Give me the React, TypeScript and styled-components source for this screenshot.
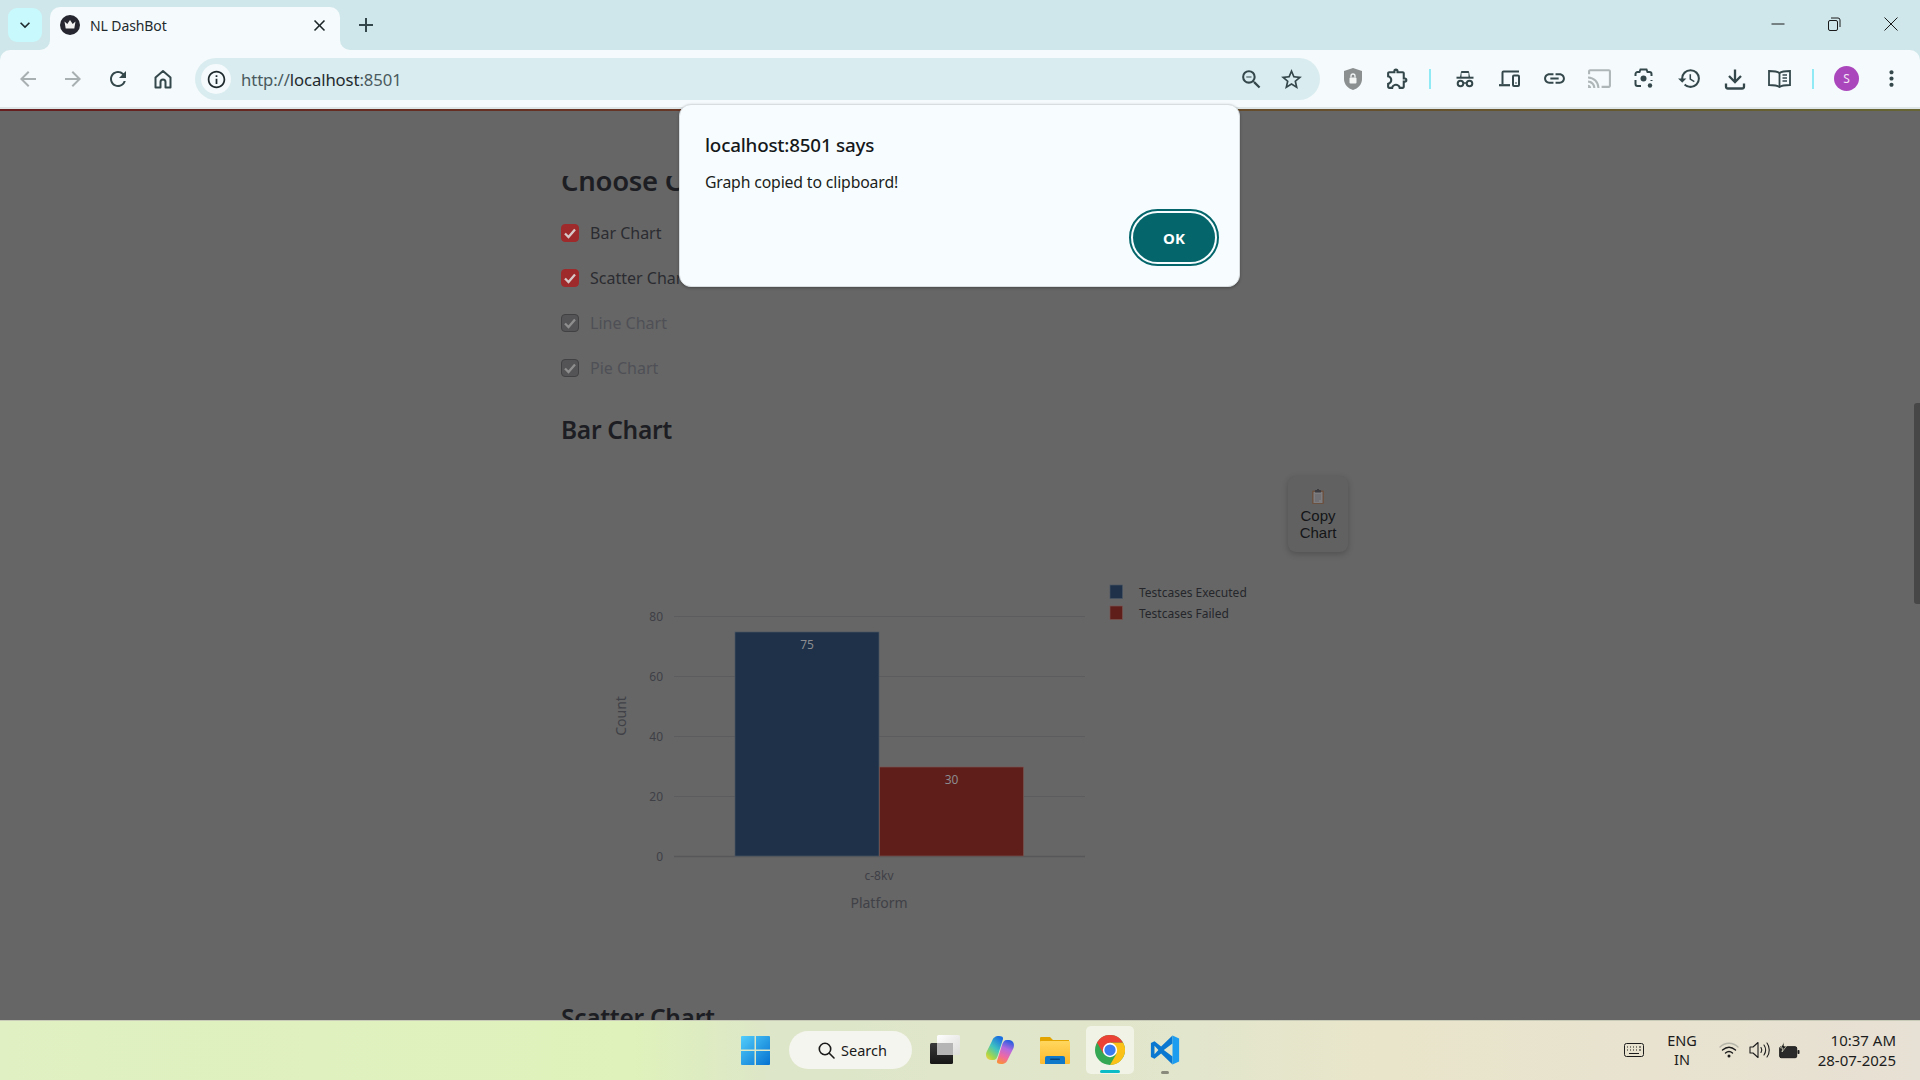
import React from "react";
import styled, { createGlobalStyle } from "styled-components";
import {
  MdArrowBack, MdArrowForward, MdRefresh, MdInfoOutline, MdOutlineZoomOut,
  MdStarBorder, MdOutlineExtension, MdLink, MdCast, MdHistory, MdMoreVert,
  MdClose, MdAdd, MdKeyboardArrowDown,
} from "react-icons/md";

const UI = `"Noto Sans", "Open Sans", sans-serif`;
const PAGE = `"Noto Sans", "Open Sans", sans-serif`;

const Global = createGlobalStyle`
  html, body { margin: 0; padding: 0; width: 1920px; height: 1080px; overflow: hidden; background: #666; }
  #root { width: 1920px; height: 1080px; }
  * { box-sizing: border-box; }
`;

const Shell = styled.div`
  position: relative; width: 1920px; height: 1080px; display: flex; flex-direction: column;
  overflow: hidden; font-family: ${UI}; background: #666;
`;

/* ---------- tab strip ---------- */
const TabStrip = styled.div`
  height: 50px; flex: none; background: #cfe7ea; display: flex; align-items: flex-start; padding-left: 8px;
`;
const TabList = styled.div`
  width: 34px; height: 34px; margin-top: 8px; border-radius: 9px; background: #c8f9fd; color: #1f2a2e;
  display: flex; align-items: center; justify-content: center; font-size: 20px;
`;
const Tab = styled.div`
  position: relative; width: 290px; height: 43px; margin: 7px 0 0 8px; background: #f5fafc;
  border-radius: 10px 10px 0 0; display: flex; align-items: center; padding: 0 0 7px 10px;
  &::before, &::after {
    content: ""; position: absolute; bottom: 0; width: 10px; height: 10px; background: transparent;
  }
  &::before { left: -10px; border-bottom-right-radius: 10px; box-shadow: 4px 4px 0 4px #f5fafc; }
  &::after { right: -10px; border-bottom-left-radius: 10px; box-shadow: -4px 4px 0 4px #f5fafc; }
`;
const TabTitle = styled.span`
  margin-left: 10px; font-size: 14px; color: #1f2a2e; width: 220px; white-space: nowrap; letter-spacing: -0.1px;
`;
const TabClose = styled.span`
  font-size: 19px; color: #1c2528; display: flex; margin-left: 0;
`;
const NewTab = styled.span`
  margin: 13px 0 0 14px; font-size: 24px; color: #34484c; display: flex;
`;
const Spacer = styled.div`flex: 1;`;
const WinButton = styled.div`
  width: 56.5px; height: 48px; display: flex; align-items: center; justify-content: center; color: #1a1a1a;
`;
const WinControls = styled.div`
  display: flex; padding-right: 1px;
`;

/* ---------- toolbar ---------- */
const Toolbar = styled.div`
  height: 57px; flex: none; background: #f5fafc; display: flex; align-items: center; padding-left: 5px;
  border-radius: 10px 10px 0 0; position: relative;
`;
const ToolbarWrap = styled.div`background: #cfe7ea; flex: none;`;
const Hairline = styled.div`height: 2px; flex: none; background: #dfe6e8;`;
const Decoration = styled.div`
  height: 2px; flex: none; background: linear-gradient(90deg, #661e1e, #666533);
`;
const NavBtn = styled.div<{ $off?: boolean }>`
  width: 45px; height: 44px; display: flex; align-items: center; justify-content: center; font-size: 24px;
  color: ${(p) => (p.$off ? "#a9b0b2" : "#34484c")};
`;
const Omnibox = styled.div`
  width: 1125px; height: 42px; margin: 1px 0 0 10px; border-radius: 21px; background: #d9ecef;
  display: flex; align-items: center; padding: 0 9px 0 6px;
`;
const InfoChip = styled.div`
  width: 30px; height: 30px; border-radius: 50%; background: #f5fafc; color: #1f2a2e; font-size: 21px;
  display: flex; align-items: center; justify-content: center;
`;
const Url = styled.div`
  margin-left: 10px; flex: 1; font-size: 16.7px; color: #4a5a5e; letter-spacing: -0.1px; white-space: nowrap;
`;
const UrlHost = styled.span`color: #1f2a2e;`;
const OmniBtn = styled.div`
  width: 40px; height: 36px; display: flex; align-items: center; justify-content: center; font-size: 25px; color: #34484c;
`;
const ToolGroup = styled.div<{ $ml: number }>`
  display: flex; align-items: center; margin-left: ${(p) => p.$ml}px;
`;
const ToolBtn = styled.div<{ $off?: boolean }>`
  width: 45px; height: 40px; display: flex; align-items: center; justify-content: center; font-size: 25px;
  color: ${(p) => (p.$off ? "#aeb6b8" : "#34484c")};
`;
const Sep = styled.div<{ $ml: number }>`
  width: 2px; height: 20px; background: #8feaf5; margin-left: ${(p) => p.$ml}px;
`;
const Avatar = styled.div`
  width: 25px; height: 25px; border-radius: 50%; background: #ab47bc; color: #f3e5f5; font-size: 12px;
  display: flex; align-items: center; justify-content: center;
`;

/* ---------- page ---------- */
const Page = styled.div`
  flex: 1; min-height: 0; background: #666; display: flex; overflow: hidden; font-family: ${PAGE};
`;
const Main = styled.div`
  flex: 1; padding: 65px 0 0 561px; display: flex; flex-direction: column; align-items: flex-start;
  & > * { flex: none; }
`;
const ClippedHead = styled.div`
  height: 24px; overflow: hidden; display: flex; align-items: flex-end; width: 400px;
`;
const H2 = styled.h2`
  margin: 0; font-family: ${PAGE}; font-size: 24.5px; line-height: 36px; font-weight: 600; color: #1d1e23;
  white-space: nowrap; letter-spacing: -0.3px;
`;
const ClipInner = styled(H2)`margin-bottom: 1px; font-size: 27.5px;`;
const Checks = styled.div`
  display: flex; flex-direction: column; gap: 27px; margin-top: 24px;
`;
const CheckRow = styled.div`
  display: flex; align-items: center; height: 18px; gap: 11px;
`;
const Box = styled.div<{ $on: boolean }>`
  width: 18px; height: 18px; border-radius: 4px; display: flex; align-items: center; justify-content: center;
  background: ${(p) => (p.$on ? "#9e2a2b" : "#545456")};
  border: 1px solid ${(p) => (p.$on ? "#9e2a2b" : "#414143")};
  color: ${(p) => (p.$on ? "#d8c9c9" : "#8e8e8e")};
`;
const CheckLabel = styled.span<{ $on: boolean }>`
  font-size: 16px; white-space: nowrap; color: ${(p) => (p.$on ? "#2b2c31" : "#4f5056")};
`;
const SectionHead = styled(H2)`margin-top: 35px;`;
const ChartWrap = styled.div`
  position: relative; width: 800px; height: 480px; margin-top: 12px;
`;
const ChartSvg = styled.svg`display: block;`;
const Tick = styled.text`
  font-family: ${PAGE}; font-size: 12px; fill: #3f4046;
`;
const AxisTitle = styled.text`
  font-family: ${PAGE}; font-size: 14px; fill: #404147;
`;
const BarValue = styled.text`
  font-family: ${PAGE}; font-size: 12px; fill: #8c8c90;
`;
const LegendText = styled.text`
  font-family: ${PAGE}; font-size: 12px; fill: #25262b;
`;
const CopyBtn = styled.div`
  position: absolute; left: 727px; top: 16px; width: 60px; height: 76px; border-radius: 8px; background: #616161;
  box-shadow: 0 2px 6px rgba(0,0,0,.22); display: flex; flex-direction: column; align-items: center;
  padding-top: 13px; font-family: "Liberation Sans", Arial, sans-serif; font-size: 15px; line-height: 17px;
  color: #141518; text-align: center;
`;
const CopyIcon = styled.svg`display: block; margin-bottom: 3px;`;
const ScatterHead = styled(H2)`margin-top: 60px;`;
const ScrollTrack = styled.div`width: 6px; flex: none; padding-top: 292px;`;
const ScrollThumb = styled.div`height: 201px; background: #474747; border-radius: 3px 0 0 3px;`;

/* ---------- dialog ---------- */
const Dialog = styled.div`
  position: absolute; left: 679px; top: 104px; width: 561px; height: 183px; background: #f7fdff;
  border: 1px solid #d8dde0; border-radius: 12px; box-shadow: 0 1px 3px rgba(0,0,0,.3);
  padding: 25px 20px 20px 25px; display: flex; flex-direction: column;
`;
const DialogTitle = styled.div`
  font-size: 18.8px; line-height: 30px; font-weight: 500; color: #15181a; letter-spacing: -0.2px;
`;
const DialogText = styled.div`
  margin-top: 11px; font-size: 15.8px; line-height: 22px; color: #1b1e20; letter-spacing: -0.15px;
`;
const DialogActions = styled.div`
  margin-top: auto; display: flex; justify-content: flex-end;
`;
const OkRing = styled.div`
  width: 90px; height: 57px; border-radius: 29px; border: 2px solid #04666b; padding: 2px; background: #f7fdff;
`;
const OkBtn = styled.div`
  width: 100%; height: 100%; border-radius: 25px; background: #04666b; color: #fff; font-size: 15px; font-weight: 700;
  display: flex; align-items: center; justify-content: center;
`;

/* ---------- taskbar ---------- */
const Taskbar = styled.div`
  height: 60px; flex: none; border-top: 1px solid #c8cbb8; display: flex; align-items: center; padding: 0 24px 1px 741px;
  background: linear-gradient(90deg, #e0f0c2 0%, #dff2bb 33%, #dde6c8 40%, #e2e6cc 62%, #e9e5ca 72%, #e7e0d4 100%);
`;
const TaskIcon = styled.div<{ $ml: number; $w?: number }>`
  width: ${(p) => p.$w ?? 30}px; height: 30px; margin-left: ${(p) => p.$ml}px; flex: none;
  display: flex; align-items: center; justify-content: center;
`;
const SearchPill = styled.div`
  width: 123px; height: 38px; margin-left: 19px; flex: none; border-radius: 19px; background: #f4f5ee; color: #1a1a1a;
  display: flex; align-items: center; padding-left: 29px; gap: 6px; font-size: 14.5px;
`;
const ChromeTile = styled.div`
  position: relative; width: 48px; height: 48px; margin-left: 16px; flex: none; border-radius: 5px; background: #f1f3e6;
  display: flex; align-items: center; justify-content: center;
`;
const ActiveBar = styled.div`
  position: absolute; left: 14px; bottom: 1px; width: 20px; height: 3px; border-radius: 2px; background: #0bbcc6;
`;
const VsSlot = styled(TaskIcon)`position: relative;`;
const RunDot = styled.div`
  position: absolute; left: 11px; bottom: -9px; width: 8px; height: 3px; border-radius: 2px; background: #8a8a7c;
`;
const Tray = styled.div`display: flex; align-items: center; color: #1c1c1c;`;
const TrayIcon = styled.div<{ $ml: number; $w: number }>`
  width: ${(p) => p.$w}px; margin-left: ${(p) => p.$ml}px; display: flex; justify-content: center; align-items: center;
`;
const Lang = styled.div`
  width: 40px; margin-left: 18px; font-size: 14.5px; line-height: 19px; text-align: center;
`;
const Clock = styled.div`
  width: 96px; font-size: 15px; line-height: 20px; text-align: right; white-space: nowrap;
`;

/* ---------- drawings ---------- */
const Favicon = () => (
  <svg width="20" height="20" viewBox="0 0 20 20">
    <circle cx="10" cy="10" r="10" fill="#25262f" />
    <path d="M4.5 6.5 7.3 9 10 5l2.7 4 2.8-2.500-1.200 7H5.700z" fill="#f2f2f2" />
  </svg>
);
const HomeIcon = () => (
  <svg width="20" height="20" viewBox="0 0 20 20" fill="none" stroke="currentColor" strokeWidth="2" strokeLinejoin="round">
    <path d="M10 2 2.500 8.500V18.500h5v-5.500a2.500 2.500 0 0 1 5 0v5.500h5V8.500z" />
  </svg>
);
const Shield = () => (
  <svg width="20" height="24" viewBox="0 0 20 24">
    <path d="M10 1 19 4v8c0 5.500-4 9.500-9 11C5 21.500 1 17.500 1 12V4z" fill="#8b8f90" />
    <rect x="6.500" y="10.500" width="7" height="6" rx="1" fill="#f3f5f5" />
    <path d="M8 10.500V9a2 2 0 0 1 4 0v1.500" fill="none" stroke="#f3f5f5" strokeWidth="1.300" />
  </svg>
);
const Incognito = () => (
  <svg width="18" height="18" viewBox="0 0 18 18" fill="none" stroke="currentColor" strokeWidth="2">
    <path d="M4.500 7.500 5.500 1.500h7l1 6" fill="currentColor" strokeWidth="1" />
    <path d="M5.500 3v4h7V3" fill="#f5fafc" stroke="none" />
    <path d="M0.500 7.700h17" />
    <circle cx="4.500" cy="13.500" r="2.800" />
    <circle cx="13.500" cy="13.500" r="2.800" />
    <path d="M7.300 13h3.400" strokeWidth="1.500" />
  </svg>
);
const Devices = () => (
  <svg width="21" height="17" viewBox="0 0 21 17" fill="none" stroke="currentColor" strokeWidth="2">
    <path d="M3.500 14V2.500a1 1 0 0 1 1-1H20" />
    <path d="M0 15.200h11" strokeWidth="2.200" />
    <rect x="14" y="5.500" width="6" height="10.500" rx="1" />
    <path d="M17 12.500v1" />
  </svg>
);
const Lens = () => (
  <svg width="21" height="21" viewBox="0 0 21 21" fill="none" stroke="currentColor" strokeWidth="2">
    <path d="M1.500 8V6a2 2 0 0 1 2-2h2l1-2.500h6l1 2.500h2a2 2 0 0 1 2 2v2" />
    <path d="M1.500 12v4a2 2 0 0 0 2 2H7" />
    <path d="M17.500 12v1" />
    <circle cx="9.500" cy="10.500" r="3" fill="currentColor" stroke="none" />
    <circle cx="16" cy="17.500" r="2.200" fill="currentColor" stroke="none" />
  </svg>
);
const DownloadIcon = () => (
  <svg width="22" height="22" viewBox="0 0 22 22" fill="none" stroke="currentColor" strokeWidth="2.300">
    <path d="M11 1.500v12" />
    <path d="M5 8l6 6 6-6" />
    <path d="M2 15.500v3a2 2 0 0 0 2 2h14a2 2 0 0 0 2-2v-3" />
  </svg>
);
const BookIcon = () => (
  <svg width="23" height="18" viewBox="0 0 23 18" fill="none" stroke="currentColor" strokeWidth="1.800">
    <path d="M11.500 3C9.500 1.500 6 1 1 1v14c5 0 8.500.5 10.500 2 2-1.500 5.500-2 10.500-2V1c-5 0-8.500.5-10.500 2z" />
    <path d="M11.500 3v14" />
    <path d="M14.500 5h4.500M14.500 8h4.500M14.500 11h4.500" strokeWidth="1.500" />
  </svg>
);
const WinGlyph = ({ kind }: { kind: "min" | "max" | "close" }) => (
  <svg width="14" height="14" viewBox="0 0 14 14" fill="none" stroke="currentColor" strokeWidth="1">
    {kind === "min" && <path d="M0.500 7h13" />}
    {kind === "max" && (
      <>
        <rect x="1.500" y="3.500" width="9" height="10" rx="1.500" />
        <path d="M4 1h7a2 2 0 0 1 2 2v7" />
      </>
    )}
    {kind === "close" && <path d="M0.500 0.500l13 13M13.500 0.500l-13 13" />}
  </svg>
);
const Check = () => (
  <svg width="14" height="14" viewBox="0 0 14 14" fill="none" stroke="currentColor" strokeWidth="2.300">
    <path d="M2 7.500 5.500 11 12 3.500" />
  </svg>
);
const WinLogo = () => (
  <svg width="29" height="29" viewBox="0 0 29 29">
    <defs>
      <linearGradient id="wl" x1="0" y1="0" x2="1" y2="1">
        <stop offset="0" stopColor="#52cdfb" />
        <stop offset="1" stopColor="#0572d0" />
      </linearGradient>
    </defs>
    <path d="M1 0h12.500v13.500H0V1a1 1 0 0 1 1-1zM15 0h13a1 1 0 0 1 1 1v12.500H15zM0 15h13.500v14H1a1 1 0 0 1-1-1zM15 15h14v13a1 1 0 0 1-1 1H15z" fill="url(#wl)" />
  </svg>
);
const SearchIcon = () => (
  <svg width="17" height="17" viewBox="0 0 17 17" fill="none" stroke="#1a1a1a" strokeWidth="1.600" strokeLinecap="round">
    <circle cx="7" cy="7" r="5.700" />
    <path d="M11.300 11.300 16 16" />
  </svg>
);
const TaskView = () => (
  <svg width="30" height="30" viewBox="0 0 30 30">
    <defs>
      <linearGradient id="tv" x1="0" y1="0" x2="0" y2="1">
        <stop offset="0" stopColor="#3a3a3a" />
        <stop offset="1" stopColor="#161616" />
      </linearGradient>
      <linearGradient id="tl" x1="0" y1="0" x2="1" y2="1">
        <stop offset="0" stopColor="#ffffff" />
        <stop offset="1" stopColor="#dcdcdc" stopOpacity=".85" />
      </linearGradient>
    </defs>
    <rect x="0" y="8" width="23" height="21" rx="1.500" fill="url(#tv)" />
    <rect x="7" y="0" width="23" height="20" rx="1.500" fill="url(#tl)" />
    <rect x="7" y="8" width="16" height="12" fill="#b5b5b5" />
  </svg>
);
const Copilot = () => (
  <svg width="30" height="30" viewBox="0 0 30 30">
    <defs>
      <linearGradient id="c1" x1=".7" y1="0" x2=".1" y2="1">
        <stop offset="0" stopColor="#1a6fe0" />
        <stop offset=".45" stopColor="#3fc4c0" />
        <stop offset=".8" stopColor="#a6d64a" />
        <stop offset="1" stopColor="#f4d03f" />
      </linearGradient>
      <linearGradient id="c2" x1=".6" y1="0" x2=".3" y2="1">
        <stop offset="0" stopColor="#2a5fe0" />
        <stop offset=".35" stopColor="#b46ae0" />
        <stop offset=".7" stopColor="#f06aa0" />
        <stop offset="1" stopColor="#f98f3a" />
      </linearGradient>
    </defs>
    <path d="M14 1C10 1 8 3 7 6L1.500 17C0 21 2 25 6 25H8c3 0 4-2 5-5L18 4c.5-2-1-3-4-3z" fill="url(#c1)" />
    <path d="M16 29c4 0 6-2 7-5l5.500-11C30 9 28 5 24 5H22c-3 0-4 2-5 5L12 26c-.5 2 1 3 4 3z" fill="url(#c2)" />
  </svg>
);
const Folder = () => (
  <svg width="30" height="27" viewBox="0 0 30 27">
    <defs>
      <linearGradient id="fo" x1="0" y1="0" x2="0" y2="1">
        <stop offset="0" stopColor="#ffd75e" />
        <stop offset="1" stopColor="#fdb92c" />
      </linearGradient>
    </defs>
    <path d="M1 0h9l3 3h16v6H0V1a1 1 0 0 1 1-1z" fill="#e3a400" />
    <rect x="0" y="4" width="30" height="23" rx="1" fill="url(#fo)" />
    <path d="M5 27v-6a2 2 0 0 1 2-2h16a2 2 0 0 1 2 2v6z" fill="#0f78c8" />
    <rect x="10" y="21.500" width="10" height="1.500" rx=".7" fill="#06457c" />
  </svg>
);
const ChromeLogo = () => (
  <svg width="30" height="30" viewBox="0 0 48 48">
    <circle cx="24" cy="24" r="24" fill="#34a853" />
    <path d="M44.800 12A24 24 0 0 1 24 48L34.400 30 24 12z" fill="#fbc116" />
    <path d="M3.200 12A24 24 0 0 1 44.800 12H24L13.600 30z" fill="#ea4335" />
    <circle cx="24" cy="24" r="11.500" fill="#fff" />
    <circle cx="24" cy="24" r="9" fill="#3b7bf0" />
  </svg>
);
const VsCode = () => (
  <svg width="30" height="30" viewBox="0 0 100 100">
    <path fillRule="evenodd" d="M75 2 37 38 15 21 3 27v46l12 6 22-17 38 36zM75 28 46 50l29 22zM15 36 28 50 15 64z" fill="#0a78d0" />
    <path d="M75 2l22 10v76L75 98z" fill="#1c9df0" />
  </svg>
);
const Keyboard = () => (
  <svg width="20" height="14" viewBox="0 0 20 14" fill="none" stroke="#1c1c1c">
    <rect x=".5" y=".5" width="19" height="13" rx="2" />
    <path d="M3 4h1M6 4h1M9 4h1M12 4h1M15 4h2M3 7h1M6 7h1M9 7h1M12 7h1M15 7h2M5 10.500h10" strokeWidth="1.200" />
  </svg>
);
const Wifi = () => (
  <svg width="20" height="16" viewBox="0 0 20 16" fill="none" strokeLinecap="round">
    <path d="M1 5c5-5 13-5 18 0" stroke="#b5b5a8" strokeWidth="1.300" />
    <path d="M3.500 8c4-3.500 9-3.500 13 0" stroke="#1c1c1c" strokeWidth="1.400" />
    <path d="M6.500 11c2-1.700 5-1.700 7 0" stroke="#1c1c1c" strokeWidth="1.400" />
    <circle cx="10" cy="14" r="1.500" fill="#1c1c1c" />
  </svg>
);
const Volume = () => (
  <svg width="21" height="18" viewBox="0 0 21 18" fill="none" stroke="#1c1c1c" strokeWidth="1.100" strokeLinecap="round">
    <path d="M1 6h3l5-4.500v15L4 12H1z" strokeLinejoin="round" />
    <path d="M12 6.500c1 1.500 1 3.500 0 5M15 4c2 3 2 7 0 10M18 2c3 4 3 10 0 14" />
  </svg>
);
const Battery = () => (
  <svg width="21" height="17" viewBox="0 0 21 17">
    <rect x=".7" y="4.700" width="17" height="11" rx="1.500" fill="#2a2a2a" stroke="#1c1c1c" />
    <rect x="18.500" y="8" width="2" height="4" rx=".8" fill="#1c1c1c" />
    <path d="M5 0 1.500 6H4L3 10 7.500 4H5z" fill="#1c1c1c" stroke="#e8e6cf" strokeWidth=".7" />
  </svg>
);
const Clipboard = () => (
  <CopyIcon width="14" height="15" viewBox="0 0 14 15">
    <rect x="1" y="1.500" width="12" height="13.500" rx="1" fill="#6b5140" />
    <rect x="2.500" y="3" width="9" height="11" fill="#7d7d80" />
    <path d="M4 6h6M4 8h6M4 10h6M4 12h4" stroke="#616164" strokeWidth=".8" />
    <rect x="4" y="1" width="6" height="2.500" rx=".5" fill="#3c3c40" />
    <rect x="6" y="0" width="2" height="1.500" fill="#3c3c40" />
  </CopyIcon>
);

const gridY = [
  { label: "80", y: 616 }, { label: "60", y: 676 }, { label: "40", y: 736 }, { label: "20", y: 796 }, { label: "0", y: 856 },
];
const bars = [
  { x: 735, w: 144, top: 632, fill: "#1e3148", stroke: "#4a5664", value: "75" },
  { x: 879.5, w: 144, top: 767, fill: "#5f1e19", stroke: "#785450", value: "30" },
];
const legend = [
  { y: 585, fill: "#1e3148", stroke: "#4a5664", label: "Testcases Executed" },
  { y: 606, fill: "#5f1e19", stroke: "#785450", label: "Testcases Failed" },
];
const checks = [
  { label: "Bar Chart", on: true }, { label: "Scatter Chart", on: true },
  { label: "Line Chart", on: false }, { label: "Pie Chart", on: false },
];

const Chart = () => (
  <ChartSvg width="800" height="480" viewBox="561 460 800 480">
    {gridY.map((g) => (
      <g key={g.label}>
        <line x1="674" x2="1085" y1={g.y + 0.5} y2={g.y + 0.5} stroke={g.label === "0" ? "#57575a" : "#5c5c5e"} strokeWidth={g.label === "0" ? 1.500 : 1} />
        <Tick x="663" y={g.y + 5} textAnchor="end">{g.label}</Tick>
      </g>
    ))}
    {bars.map((b) => (
      <g key={b.value}>
        <rect x={b.x} y={b.top} width={b.w} height={856 - b.top} fill={b.fill} stroke={b.stroke} strokeWidth="0.700" />
        <BarValue x={b.x + b.w / 2} y={b.top + 17} textAnchor="middle">{b.value}</BarValue>
      </g>
    ))}
    <Tick x="879" y="880" textAnchor="middle">c-8kv</Tick>
    <AxisTitle x="879" y="908" textAnchor="middle">Platform</AxisTitle>
    <AxisTitle transform="translate(626 716) rotate(-90)" textAnchor="middle">Count</AxisTitle>
    {legend.map((l) => (
      <g key={l.label}>
        <rect x="1110" y={l.y} width="12.500" height="13.500" fill={l.fill} stroke={l.stroke} strokeWidth="0.700" />
        <LegendText x="1139" y={l.y + 11.500}>{l.label}</LegendText>
      </g>
    ))}
  </ChartSvg>
);

export default function App() {
  return (
    <Shell>
      <Global />
      <TabStrip>
        <TabList><MdKeyboardArrowDown /></TabList>
        <Tab>
          <Favicon />
          <TabTitle>NL DashBot</TabTitle>
          <TabClose><MdClose /></TabClose>
        </Tab>
        <NewTab><MdAdd /></NewTab>
        <Spacer />
        <WinControls>
          <WinButton><WinGlyph kind="min" /></WinButton>
          <WinButton><WinGlyph kind="max" /></WinButton>
          <WinButton><WinGlyph kind="close" /></WinButton>
        </WinControls>
      </TabStrip>
      <ToolbarWrap>
        <Toolbar>
          <NavBtn $off><MdArrowBack /></NavBtn>
          <NavBtn $off><MdArrowForward /></NavBtn>
          <NavBtn><MdRefresh /></NavBtn>
          <NavBtn><HomeIcon /></NavBtn>
          <Omnibox>
            <InfoChip><MdInfoOutline /></InfoChip>
            <Url>http://<UrlHost>localhost</UrlHost>:8501</Url>
            <OmniBtn><MdOutlineZoomOut /></OmniBtn>
            <OmniBtn><MdStarBorder /></OmniBtn>
          </Omnibox>
          <ToolGroup $ml={10}>
            <ToolBtn><Shield /></ToolBtn>
            <ToolBtn><MdOutlineExtension /></ToolBtn>
          </ToolGroup>
          <Sep $ml={9} />
          <ToolGroup $ml={11}>
            <ToolBtn><Incognito /></ToolBtn>
            <ToolBtn><Devices /></ToolBtn>
            <ToolBtn><MdLink /></ToolBtn>
            <ToolBtn $off><MdCast /></ToolBtn>
            <ToolBtn><Lens /></ToolBtn>
            <ToolBtn><MdHistory /></ToolBtn>
            <ToolBtn><DownloadIcon /></ToolBtn>
            <ToolBtn><BookIcon /></ToolBtn>
          </ToolGroup>
          <Sep $ml={10} />
          <ToolGroup $ml={10}>
            <ToolBtn><Avatar>S</Avatar></ToolBtn>
            <ToolBtn><MdMoreVert /></ToolBtn>
          </ToolGroup>
        </Toolbar>
      </ToolbarWrap>
      <Hairline />
      <Decoration />
      <Page>
        <Main>
          <ClippedHead><ClipInner>Choose Charts to Display</ClipInner></ClippedHead>
          <Checks>
            {checks.map((c) => (
              <CheckRow key={c.label}>
                <Box $on={c.on}><Check /></Box>
                <CheckLabel $on={c.on}>{c.label}</CheckLabel>
              </CheckRow>
            ))}
          </Checks>
          <SectionHead>Bar Chart</SectionHead>
          <ChartWrap>
            <Chart />
            <CopyBtn>
              <Clipboard />
              Copy<br />Chart
            </CopyBtn>
          </ChartWrap>
          <ScatterHead>Scatter Chart</ScatterHead>
        </Main>
        <ScrollTrack><ScrollThumb /></ScrollTrack>
      </Page>
      <Taskbar>
        <TaskIcon $ml={0} $w={29}><WinLogo /></TaskIcon>
        <SearchPill><SearchIcon />Search</SearchPill>
        <TaskIcon $ml={18}><TaskView /></TaskIcon>
        <TaskIcon $ml={25}><Copilot /></TaskIcon>
        <TaskIcon $ml={25}><Folder /></TaskIcon>
        <ChromeTile><ChromeLogo /><ActiveBar /></ChromeTile>
        <VsSlot $ml={16}><VsCode /><RunDot /></VsSlot>
        <Spacer />
        <Tray>
          <TrayIcon $ml={0} $w={20}><Keyboard /></TrayIcon>
          <Lang>ENG<br />IN</Lang>
          <TrayIcon $ml={17} $w={20}><Wifi /></TrayIcon>
          <TrayIcon $ml={10} $w={21}><Volume /></TrayIcon>
          <TrayIcon $ml={9} $w={21}><Battery /></TrayIcon>
          <Clock>10:37 AM<br />28-07-2025</Clock>
        </Tray>
      </Taskbar>
      <Dialog>
        <DialogTitle>localhost:8501 says</DialogTitle>
        <DialogText>Graph copied to clipboard!</DialogText>
        <DialogActions><OkRing><OkBtn>OK</OkBtn></OkRing></DialogActions>
      </Dialog>
    </Shell>
  );
}
